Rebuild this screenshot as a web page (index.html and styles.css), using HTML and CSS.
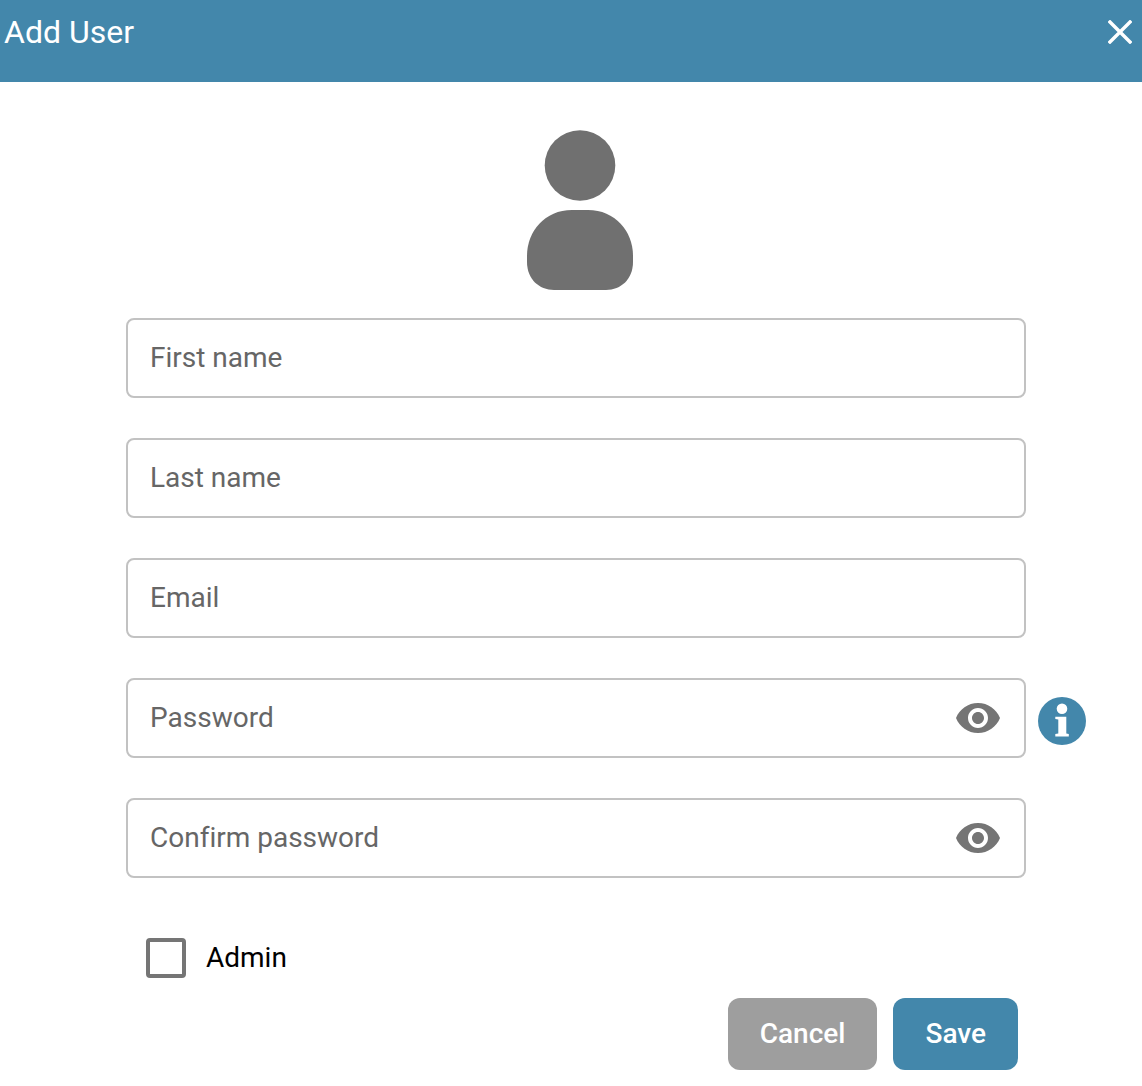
FILE: index.html
```html
<!DOCTYPE html>
<html lang="en">
<head>
<meta charset="utf-8">
<meta name="viewport" content="width=device-width, initial-scale=1">
<title>Add User</title>
<link rel="stylesheet" href="styles.css">
</head>
<body>
<header class="header">
  <h1 class="title">Add User</h1>
  <button class="icon-button close" type="button" aria-label="Close">
    <svg width="24" height="24" viewBox="0 0 24 24"><path d="M2 2 22 22M22 2 2 22" fill="none" stroke="currentColor" stroke-width="3.400" stroke-linecap="square"/></svg>
  </button>
</header>
<form class="form">
  <svg class="avatar" width="106" height="160" viewBox="0 0 106 160" aria-hidden="true"><circle cx="53" cy="35.500" r="35.300"/><path d="M45 80H61C88 80 106 101 106 126V132C106 149 94 160 79 160H27C12 160 0 149 0 132V126C0 101 18 80 45 80Z"/></svg>
  <div class="field"><input class="input" type="text" placeholder="First name" aria-label="First name"></div>
  <div class="field"><input class="input" type="text" placeholder="Last name" aria-label="Last name"></div>
  <div class="field"><input class="input" type="email" placeholder="Email" aria-label="Email"></div>
  <div class="field">
    <input class="input" type="password" placeholder="Password" aria-label="Password">
    <button class="icon-button eye" type="button" aria-label="Show password"><svg width="44" height="30" viewBox="1 4.500 22 15"><path fill="currentColor" d="M12 4.500C7 4.500 2.730 7.610 1 12c1.730 4.390 6 7.500 11 7.500s9.270-3.110 11-7.500c-1.730-4.390-6-7.500-11-7.500zM12 17c-2.760 0-5-2.240-5-5s2.240-5 5-5 5 2.240 5 5-2.240 5-5 5zm0-8c-1.660 0-3 1.340-3 3s1.340 3 3 3 3-1.340 3-3-1.340-3-3-3z"/></svg></button>
    <button class="icon-button info" type="button" aria-label="Password rules"><svg width="48" height="48" viewBox="0 0 48 48"><circle cx="24" cy="24" r="24" fill="#4387ab"/><circle cx="24" cy="11.700" r="5.300" fill="#fff"/><path fill="#fff" d="M17.300 19.700H28.300V36.500L30.800 37V39.400H17.300V37L20.300 36.500V22.500L17.300 22Z"/></svg></button>
  </div>
  <div class="field">
    <input class="input" type="password" placeholder="Confirm password" aria-label="Confirm password">
    <button class="icon-button eye" type="button" aria-label="Show confirmed password"><svg width="44" height="30" viewBox="1 4.500 22 15"><path fill="currentColor" d="M12 4.500C7 4.500 2.730 7.610 1 12c1.730 4.390 6 7.500 11 7.500s9.270-3.110 11-7.500c-1.730-4.390-6-7.500-11-7.500zM12 17c-2.760 0-5-2.240-5-5s2.240-5 5-5 5 2.240 5 5-2.240 5-5 5zm0-8c-1.660 0-3 1.340-3 3s1.340 3 3 3 3-1.340 3-3-1.340-3-3-3z"/></svg></button>
  </div>
  <label class="check"><input class="checkbox" type="checkbox">Admin</label>
  <div class="actions">
    <button class="button cancel" type="button">Cancel</button>
    <button class="button save" type="submit">Save</button>
  </div>
</form>
</body>
</html>
```
FILE: styles.css
```css
* { box-sizing: border-box; }
body { margin: 0; background: #fff; color: #000; font-family: Roboto, sans-serif; font-size: 28px; font-variant-ligatures: none; }
.header { display: flex; justify-content: space-between; align-items: flex-start; min-height: 82px; padding: 12px 10px 0 4px; background: #4387ab; color: #fff; }
.title { margin: 0; font-size: 32px; line-height: 40px; font-weight: 400; }
.icon-button { display: flex; padding: 0; border: 0; background: none; color: #757575; cursor: pointer; }
.close { padding-top: 8px; color: #fff; }
.form { display: flex; flex-direction: column; padding: 48px 116px 16px 126px; }
.avatar { align-self: center; margin: 0 0 28px 8px; fill: #707070; }
.field { position: relative; margin-bottom: 40px; }
.input { display: block; width: 100%; height: 80px; padding: 0 80px 2px 22px; border: 2px solid #c2c2c2; border-radius: 8px; background: #fff; color: #000; font: inherit; font-variant-ligatures: none; }
.input::placeholder { color: #666; opacity: 1; }
.eye { position: absolute; top: 25px; right: 26px; }
.info { position: absolute; top: 19px; left: calc(100% + 12px); }
.check { display: flex; align-items: center; align-self: flex-start; gap: 20px; margin: 20px 0 20px 20px; line-height: 40px; }
.checkbox { appearance: none; width: 40px; height: 40px; margin: 0; border: 4px solid #757575; border-radius: 4px; }
.checkbox:checked { background: #4387ab; }
.actions { display: flex; justify-content: flex-end; gap: 16px; padding-right: 8px; }
.button { height: 72px; padding: 0 32px 2px; border: 0; border-radius: 12px; color: #fff; font: inherit; font-weight: 500; cursor: pointer; }
.cancel { background: #9e9e9e; }
.save { background: #4387ab; }
```
